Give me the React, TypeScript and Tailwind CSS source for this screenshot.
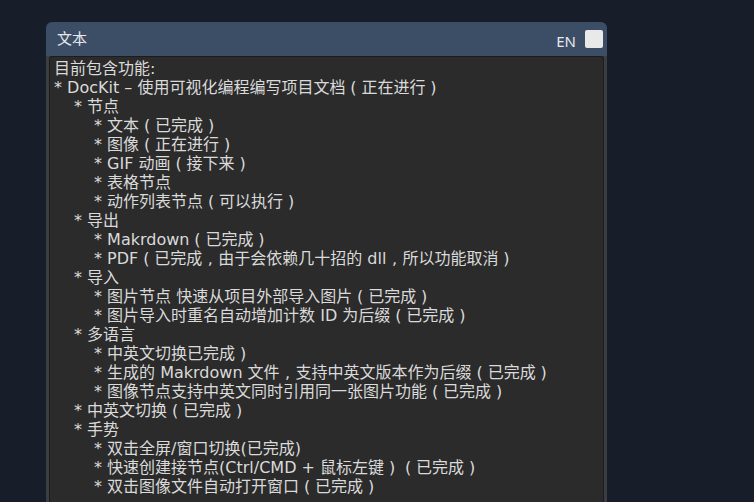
const lines: [number, string][] = [
  [0, "目前包含功能:"],
  [0, "* DocKit – 使用可视化编程编写项目文档（正在进行）"],
  [1, "* 节点"],
  [2, "* 文本（已完成）"],
  [2, "* 图像（正在进行）"],
  [2, "* GIF 动画（接下来）"],
  [2, "* 表格节点"],
  [2, "* 动作列表节点（可以执行）"],
  [1, "* 导出"],
  [2, "* Makrdown（已完成）"],
  [2, "* PDF（已完成，由于会依赖几十招的 dll，所以功能取消）"],
  [1, "* 导入"],
  [2, "* 图片节点 快速从项目外部导入图片（已完成）"],
  [2, "* 图片导入时重名自动增加计数 ID 为后缀（已完成）"],
  [1, "* 多语言"],
  [2, "* 中英文切换已完成）"],
  [2, "* 生成的 Makrdown 文件，支持中英文版本作为后缀（已完成）"],
  [2, "* 图像节点支持中英文同时引用同一张图片功能（已完成）"],
  [1, "* 中英文切换（已完成）"],
  [1, "* 手势"],
  [2, "* 双击全屏/窗口切换(已完成)"],
  [2, "* 快速创建接节点(Ctrl/CMD + 鼠标左键）（已完成）"],
  [2, "* 双击图像文件自动打开窗口（已完成）"],
];

const indent = ["pl-0", "pl-5", "pl-10"];

// full-width punctuation is drawn centred in its cell, as in the editor
const punct: Record<string, string> = { "（": "(", "）": ")", "，": "," };

function Line({ text }: { text: string }) {
  return (
    <>
      {text.split(/([（），])/).map((part, i) =>
        punct[part] ? (
          <span key={i} className="inline-block w-[16px] text-center">
            {punct[part]}
          </span>
        ) : (
          <span key={i}>{part}</span>
        )
      )}
    </>
  );
}

export default function App() {
  return (
    <div
      className="h-[502px] w-[754px] overflow-hidden bg-[#171d29] pl-[46px] pt-[22px]"
      style={{ fontFamily: '"DejaVu Sans", "Noto Sans CJK SC", sans-serif' }}
    >
      <div className="flex h-[500px] w-[561px] flex-col">
        {/* Header */}
        <div className="flex h-[34px] items-center justify-between rounded-t-[6px] bg-[#3c4d66] pl-[11px] pr-[4px]">
          <span className="text-[15px] text-[#e6e8ec]">文本</span>
          <div className="mt-[4px] flex items-center gap-[9px]">
            <span className="font-['Noto_Sans'] text-[15px] text-[#e6e8ec]">EN</span>
            <div className="mb-[4px] h-[18px] w-[18px] rounded-[2px] bg-[#e9e9e9]" />
          </div>
        </div>
        {/* Body */}
        <div className="flex-1 bg-[#3a3d42] px-[3px]">
          <div className="h-full rounded-t-[3px] border-t border-l border-r border-[#1c1c1c] bg-[#2b2b2b] pl-[4px] pt-[2px] text-[16px] leading-[19px] text-[#dadada]">
            {lines.map(([lvl, t], i) => (
              <div key={i} className={`${indent[lvl]} whitespace-pre`}>
                <Line text={t} />
              </div>
            ))}
          </div>
        </div>
      </div>
    </div>
  );
}
